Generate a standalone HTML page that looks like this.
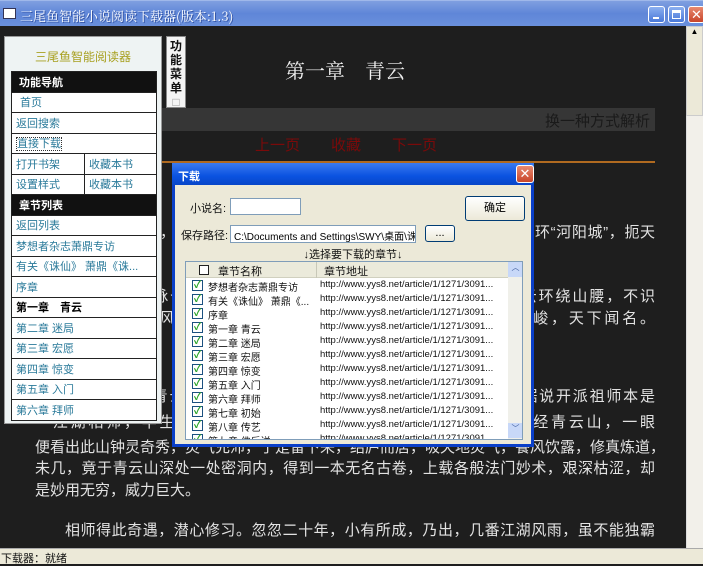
<!DOCTYPE html>
<html><head><meta charset="utf-8"><style>
*{margin:0;padding:0;box-sizing:border-box}
body{width:703px;height:564px;overflow:hidden;background:#1e1e1e;font-family:"Liberation Sans","Noto Sans CJK SC",sans-serif;position:relative}
.abs{position:absolute}
#tb{left:0;top:0;width:703px;height:26px;background:linear-gradient(#7f9fe0,#5f86d8 50%,#6a90dc);border-top:1px solid #9fb8ea}
#tb .t{left:20px;top:5px;color:#fff;font-size:13px;font-family:"Noto Serif CJK SC",serif;text-shadow:1px 1px #3050a0}
.wb{top:5px;width:17px;height:17px;border:1px solid #fff;border-radius:3px;background:linear-gradient(#8cb0f0,#4a78d8)}
.line{position:absolute;left:35px;width:620px;color:#e2e2e2;font-size:15px;text-align:justify;text-align-last:justify;white-space:nowrap;overflow:hidden;height:22px;line-height:22px}
#panel{left:4px;top:36px;width:158px;height:388px;background:#eef3f3;border:1px solid #999}
table{border-collapse:collapse;position:absolute;left:6px;top:34px;width:146px}
td{border:1px solid #222;height:20.5px;font-size:11px;color:#2a7a9a;padding-left:4px;background:#fff;white-space:nowrap;overflow:hidden}
td.h{background:#111;color:#fff;font-weight:bold;padding-left:7px}
#dlg{left:172px;top:163px;width:362px;height:284px;background:#ece9d8;border:3px solid #0a3fc8;border-top:none}
#dt{left:-3px;top:0;width:362px;height:22px;background:linear-gradient(#3a7af0,#0a52e0 60%,#0846c8);color:#fff;font-size:11px;font-weight:bold;padding:5px 0 0 6px}
.lbl{font-size:11px;color:#111}
.inp{background:#fff;border:1px solid #7f9db9}
.btn{border:1px solid #003c74;border-radius:3px;background:linear-gradient(#fff,#ece9d8);font-size:11px;text-align:center}
#list{left:10px;top:98px;width:338px;height:179px;background:#fff;border:1px solid #7f9db9;overflow:hidden}
.r{position:absolute;left:0;width:322px;height:14px;font-size:10px;color:#111;white-space:nowrap}
.r .cb{position:absolute;left:6px;top:1px;width:11px;height:11px;border:1px solid #1c5180;background:#fff;color:#21a121;font-size:10px;line-height:9px;text-align:center;font-weight:bold}
.r .n{position:absolute;left:22px;top:0}
.r .u{position:absolute;left:134px;top:0;font-size:9.5px}
</style></head><body>
<div id="tb" class="abs"><div class="abs" style="left:3px;top:7px;width:13px;height:11px;background:#fff;border:1px solid #335"></div><div class="t abs">三尾鱼智能小说阅读下载器(版本:1.3)</div>
<div class="wb abs" style="left:648px"><div class="abs" style="left:4px;top:10px;width:6px;height:2px;background:#fff"></div></div>
<div class="wb abs" style="left:668px"><div class="abs" style="left:3px;top:3px;width:9px;height:9px;border:1px solid #fff;border-top-width:3px"></div></div>
<div class="wb abs" style="left:688px;background:linear-gradient(#e88a70,#c8452a);color:#fff;font-size:13px;text-align:center;line-height:15px">✕</div>
</div>
<!-- scrollbar -->
<div class="abs" style="left:686px;top:26px;width:17px;height:522px;background:#f2f0ea;border-left:1px solid #ddd"></div>
<div class="abs" style="left:686px;top:26px;width:17px;height:90px;background:#ece9d8;border:1px solid #ccc;font-size:8px;text-align:center">▲</div>
<!-- content -->
<div class="abs" style="left:0;top:55px;width:686px;text-align:center;color:#f0f0f0;font-size:20px;font-family:'Noto Serif CJK SC',serif;padding-left:0"><span style="margin-left:4px">第一章　青云</span></div>
<div class="abs" style="left:150px;top:108px;width:505px;height:23px;background:#363636"></div>
<div class="abs" style="left:545px;top:110px;color:#1a1a1a;font-size:15px">换一种方式解析</div>
<div class="abs" style="left:255px;top:134px;color:#7a0a0a;font-size:15px;word-spacing:0">上一页</div>
<div class="abs" style="left:331px;top:134px;color:#7a0a0a;font-size:15px">收藏</div>
<div class="abs" style="left:392px;top:134px;color:#7a0a0a;font-size:15px">下一页</div>
<div class="abs" style="left:160px;top:161px;width:495px;height:2px;background:#b06a20"></div>
<div class="line" style="top:222px">青云山脉连绵百里，峰峦起伏，最高有七峰，高耸入云，平日里只见白云环“河阳城”，扼天</div>
<div class="line" style="top:244px;text-align-last:left">十下要冲。</div>
<div class="line" style="top:286px">里，高峰青云山脉七峰之中，以正中“通天峰”为最高，终年云雾，云环绕山腰，不识</div>
<div class="line" style="top:308px">山之高峻，山中风景秀美，飞瀑奇石，灵山秀水，奇峰异石，奇峻，天下闻名。</div>
<div class="line" style="top:386px">　　悠悠千载，青云门这一脉由来已久，在江湖之上，颇有名声。据说开派祖师本是</div>
<div class="line" style="top:412px">一江湖相师，半生潦倒，一事无成，至五十岁时，漂泊到此，路经青云山，一眼</div>
<div class="line" style="top:437px">便看出此山钟灵奇秀，灵气充沛，于是留下来，结庐而居，吸天地灵气，餐风饮露，修真炼道，</div>
<div class="line" style="top:458px">未几，竟于青云山深处一处密洞内，得到一本无名古卷，上载各般法门妙术，艰深枯涩，却</div>
<div class="line" style="top:480px;text-align-last:left">是妙用无穷，威力巨大。</div>
<div class="line" style="top:520px;left:65px;width:590px">相师得此奇遇，潜心修习。忽忽二十年，小有所成，乃出，几番江湖风雨，虽不能独霸</div>
<!-- status -->
<div class="abs" style="left:0;top:548px;width:703px;height:16px;background:#ece9d8;border-top:1px solid #aaa;font-size:11px;color:#111;padding:1px 0 0 1px">下载器：就绪</div>
<!-- panel -->
<div id="panel" class="abs">
<div class="abs" style="left:0;top:11px;width:156px;text-align:center;color:#a8a020;font-size:12px">三尾鱼智能阅读器</div>
<table>
<tr><td class="h" colspan="2">功能导航</td></tr>
<tr><td colspan="2" style="padding-left:8px">首页</td></tr>
<tr><td colspan="2">返回搜索</td></tr>
<tr><td colspan="2"><span style="border:1px dotted #333">直接下载</span></td></tr>
<tr><td style="width:73px">打开书架</td><td>收藏本书</td></tr>
<tr><td>设置样式</td><td>收藏本书</td></tr>
<tr><td class="h" colspan="2">章节列表</td></tr>
<tr><td colspan="2">返回列表</td></tr>
<tr><td colspan="2">梦想者杂志萧鼎专访</td></tr>
<tr><td colspan="2">有关《诛仙》 萧鼎《诛...</td></tr>
<tr><td colspan="2">序章</td></tr>
<tr><td colspan="2" style="color:#000;font-weight:bold">第一章　青云</td></tr>
<tr><td colspan="2">第二章 迷局</td></tr>
<tr><td colspan="2">第三章 宏愿</td></tr>
<tr><td colspan="2">第四章 惊变</td></tr>
<tr><td colspan="2">第五章 入门</td></tr>
<tr><td colspan="2">第六章 拜师</td></tr>
</table></div>
<div class="abs" style="left:166px;top:36px;width:20px;height:72px;background:#f4f4f4;border:1px solid #888;font-size:12px;font-weight:bold;color:#111;line-height:14px;text-align:center;padding-top:2px">功<br>能<br>菜<br>单<br><span style="color:#999">□</span></div>
<!-- dialog -->
<div id="dlg" class="abs">
<div id="dt" class="abs">下载</div>
<div class="abs" style="left:341px;top:2px;width:18px;height:18px;border:1px solid #fff;border-radius:3px;background:linear-gradient(#e88a70,#c8452a);color:#fff;font-size:13px;text-align:center;line-height:16px">✕</div>
<div class="abs lbl" style="left:15px;top:37px">小说名:</div>
<div class="abs inp" style="left:55px;top:35px;width:71px;height:17px"></div>
<div class="abs btn" style="left:290px;top:33px;width:60px;height:25px;line-height:23px">确定</div>
<div class="abs lbl" style="left:6px;top:64px">保存路径:</div>
<div class="abs inp" style="left:55px;top:62px;width:186px;height:18px;font-size:10px;padding:2px 3px;white-space:nowrap;overflow:hidden">C:\Documents and Settings\SWY\桌面\诛仙.t</div>
<div class="abs btn" style="left:250px;top:62px;width:30px;height:17px;line-height:14px">...</div>
<div class="abs lbl" style="left:0;top:83px;width:356px;text-align:center">↓选择要下载的章节↓</div>
<div id="list" class="abs">
<div class="abs" style="left:0;top:0;width:322px;height:16px;background:#ebeadb;border-bottom:1px solid #d0d0bf;font-size:11px;color:#111">
<div class="abs" style="left:13px;top:3px;width:10px;height:10px;border:1px solid #222;background:#fff"></div>
<div class="abs" style="left:32px;top:1px">章节名称</div>
<div class="abs" style="left:130px;top:0;width:1px;height:16px;background:#c8c8b8"></div>
<div class="abs" style="left:138px;top:1px">章节地址</div></div>
<div class="abs" style="left:322px;top:0;width:15px;height:179px;background:#f0f0ea">
<div class="abs" style="left:0;top:0;width:15px;height:15px;background:#c8d8f8;color:#4060a0;font-size:8px;text-align:center">︿</div>
<div class="abs" style="left:0;top:161px;width:15px;height:15px;background:#c8d8f8;color:#4060a0;font-size:8px;text-align:center">﹀</div></div>
<div class="r" style="top:17px"><span class="cb">✓</span><span class="n">梦想者杂志萧鼎专访</span><span class="u">http://www.yys8.net/article/1/1271/3091...</span></div>
<div class="r" style="top:31px"><span class="cb">✓</span><span class="n">有关《诛仙》 萧鼎《...</span><span class="u">http://www.yys8.net/article/1/1271/3091...</span></div>
<div class="r" style="top:45px"><span class="cb">✓</span><span class="n">序章</span><span class="u">http://www.yys8.net/article/1/1271/3091...</span></div>
<div class="r" style="top:59px"><span class="cb">✓</span><span class="n">第一章 青云</span><span class="u">http://www.yys8.net/article/1/1271/3091...</span></div>
<div class="r" style="top:73px"><span class="cb">✓</span><span class="n">第二章 迷局</span><span class="u">http://www.yys8.net/article/1/1271/3091...</span></div>
<div class="r" style="top:87px"><span class="cb">✓</span><span class="n">第三章 宏愿</span><span class="u">http://www.yys8.net/article/1/1271/3091...</span></div>
<div class="r" style="top:101px"><span class="cb">✓</span><span class="n">第四章 惊变</span><span class="u">http://www.yys8.net/article/1/1271/3091...</span></div>
<div class="r" style="top:115px"><span class="cb">✓</span><span class="n">第五章 入门</span><span class="u">http://www.yys8.net/article/1/1271/3091...</span></div>
<div class="r" style="top:129px"><span class="cb">✓</span><span class="n">第六章 拜师</span><span class="u">http://www.yys8.net/article/1/1271/3091...</span></div>
<div class="r" style="top:143px"><span class="cb">✓</span><span class="n">第七章 初始</span><span class="u">http://www.yys8.net/article/1/1271/3091...</span></div>
<div class="r" style="top:157px"><span class="cb">✓</span><span class="n">第八章 传艺</span><span class="u">http://www.yys8.net/article/1/1271/3091...</span></div>
<div class="r" style="top:171px"><span class="cb">✓</span><span class="n">第九章 佛后送</span><span class="u">http://www.yys8.net/article/1/1271/3091...</span></div>
</div>
</div>
</body></html>
